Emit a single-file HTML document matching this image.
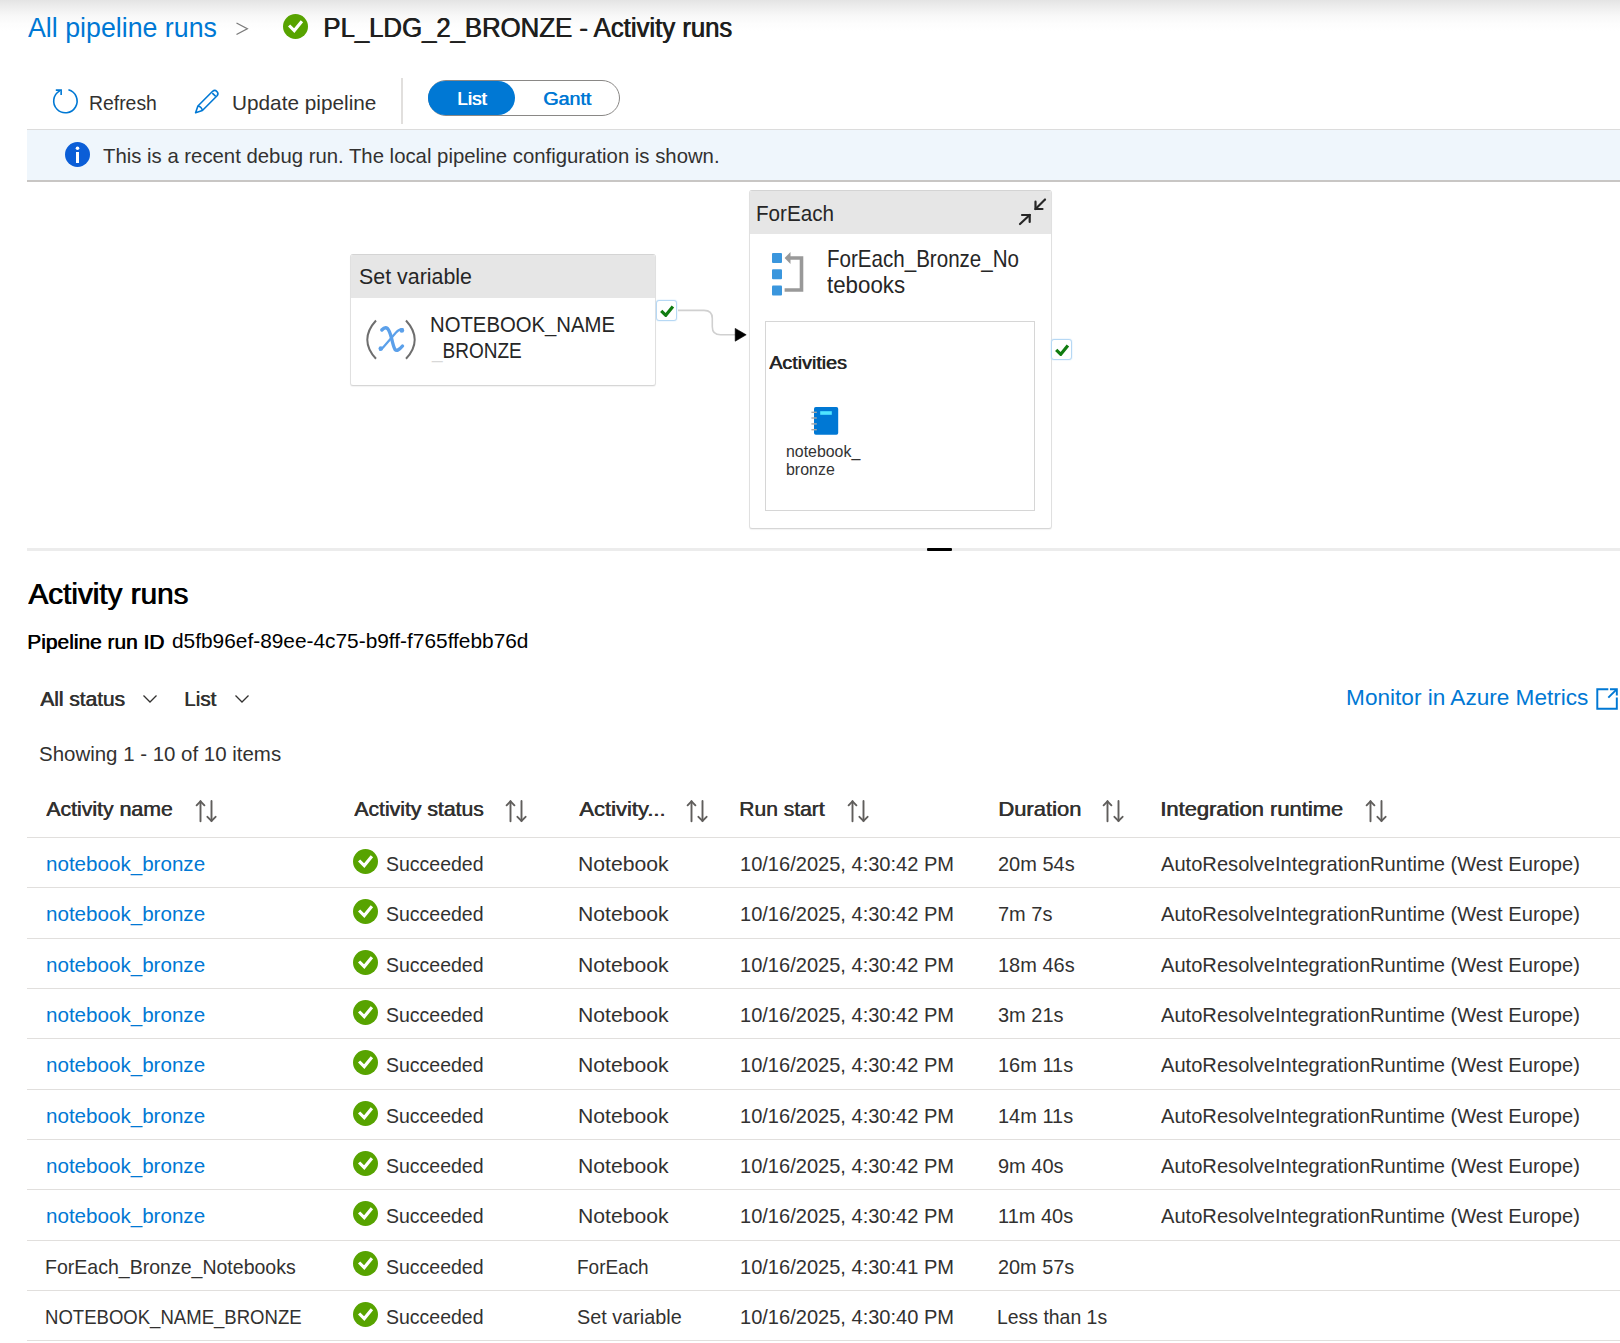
<!DOCTYPE html>
<html><head><meta charset="utf-8"><title>PL_LDG_2_BRONZE - Activity runs</title>
<style>
html,body{margin:0;padding:0;background:#fff;width:1620px;height:1343px;overflow:hidden;position:relative;font-family:"Liberation Sans",sans-serif;}
.a{position:absolute;}
.t{position:absolute;white-space:nowrap;line-height:1;transform-origin:0 0;}
.box{border:1.7px solid #e0e0e0;border-top-color:#d4d4d4;border-bottom-color:#d6d6d6;border-radius:3px;background:#fff;box-shadow:0 1px 1px rgba(0,0,0,0.05);overflow:hidden}
.hd{background:#e6e6e6}
.chk{border:1.6px solid #b6d8f4;border-radius:3px;box-shadow:0 0 1.5px #bcdcf6;background:#fff}
</style></head><body>
<div class="a" style="left:0;top:0;width:1620px;height:32px;background:linear-gradient(#e4e4e4 0,#efefef 8px,#f8f8f8 16px,#fdfdfd 24px,#fff 31px)"></div>
<div class="t" style="left:28.00px;top:13.90px;font-size:28px;color:#0078d4;font-weight:400;transform:scaleX(0.9558);">All pipeline runs</div>
<svg class="a" style="left:235px;top:22px" width="14" height="14" viewBox="0 0 14 14"><path d="M1.5 1 L12.3 6.75 L1.5 12.5" fill="none" stroke="#7a7a7a" stroke-width="1.3"/></svg>
<svg class="a" style="left:283.00px;top:14.00px" width="25" height="25" viewBox="0 0 25 25"><circle cx="12.5" cy="12.5" r="12.5" fill="#57a300"/><path d="M6.1 11.5 L11.25 16.6 L18.9 7.2" fill="none" stroke="#fff" stroke-width="3.1"/></svg>
<div class="t" style="left:322.94px;top:13.62px;font-size:27.5px;color:#201f1e;font-weight:400;transform:scaleX(0.9356);text-shadow:0.8px 0 0 #201f1e;">PL_LDG_2_BRONZE - Activity runs</div>
<svg class="a" style="left:48px;top:84px" width="36" height="34" viewBox="0 0 36 34"><g fill="none" stroke="#0078d4" stroke-width="1.6"><path d="M20.43 5.8 A11.7 11.7 0 1 1 11.73 6.87"/><path d="M7.8 6.15 L13.15 6.15 L13.15 10.9"/></g></svg>
<div class="t" style="left:89.45px;top:93.00px;font-size:20px;color:#323130;font-weight:400;transform:scaleX(0.9687);">Refresh</div>
<svg class="a" style="left:190px;top:84px" width="36" height="34" viewBox="0 0 36 34"><g fill="none" stroke="#0078d4" stroke-width="1.6" stroke-linejoin="round"><path d="M5.6 28.8 L7.9 22.0 L22.6 7.3 A3.2 3.2 0 0 1 27.1 11.8 L12.4 26.5 Z"/><path d="M22.3 9.2 L25.7 12.3"/><path d="M7.9 22.0 Q11.6 22.6 12.4 26.5"/></g></svg>
<div class="t" style="left:231.74px;top:92.75px;font-size:20.3px;color:#323130;font-weight:400;transform:scaleX(1.0242);">Update pipeline</div>
<div class="a" style="left:401px;top:78px;width:2px;height:46px;background:#e1dfdd"></div>
<div class="a" style="left:428px;top:80px;width:190px;height:34px;border:1px solid #8a8886;border-radius:18px"></div>
<div class="a" style="left:428px;top:81px;width:87px;height:34px;background:#0078d4;border-radius:17px"></div>
<div class="t" style="left:457.08px;top:90.04px;font-size:18.3px;color:#fff;font-weight:400;transform:scaleX(1.0409);text-shadow:0.6px 0 0 #fff;">List</div>
<div class="t" style="left:543.22px;top:90.04px;font-size:18.3px;color:#0078d4;font-weight:400;transform:scaleX(1.0746);text-shadow:0.6px 0 0 #0078d4;">Gantt</div>
<div class="a" style="left:27px;top:129px;width:1593px;height:50px;background:#eff6fc;border-top:1px solid #dcdcdc;border-bottom:2px solid #c8c6c4"></div>
<svg class="a" style="left:65px;top:141.5px" width="25" height="25" viewBox="0 0 25 25"><circle cx="12.5" cy="12.5" r="12.5" fill="#0b5ed7"/><circle cx="12.5" cy="6.3" r="1.8" fill="#fff"/><rect x="11" y="10" width="3" height="11" fill="#fff"/></svg>
<div class="t" style="left:102.99px;top:146.02px;font-size:20.8px;color:#323130;font-weight:400;transform:scaleX(0.9774);">This is a recent debug run. The local pipeline configuration is shown.</div>
<div class="a box" style="left:350px;top:254px;width:304px;height:130px;"><div class="hd" style="height:43px"></div></div>
<div class="t" style="left:359.34px;top:266.48px;font-size:22.5px;color:#262626;font-weight:400;transform:scaleX(0.9505);">Set variable</div>
<svg class="a" style="left:350px;top:300px" width="80" height="70" viewBox="0 0 80 70"><path d="M376 320.5 Q367.3 330 367.3 339.7 Q367.3 349.4 376 358.8" transform="translate(-350 -300)" fill="none" stroke="#6e6e6e" stroke-width="2"/><path d="M406 320.5 Q414.7 330 414.7 339.7 Q414.7 349.4 406 358.8" transform="translate(-350 -300)" fill="none" stroke="#6e6e6e" stroke-width="2"/><g fill="none" stroke="#5ba0ea" stroke-linecap="round"><path d="M31.8 30 Q35 26.4 37.6 28.6 Q39.5 30.5 41.5 38 Q43.5 47 45 49.5 Q47.5 52 52.5 46" stroke-width="3.4"/><path d="M52.5 29.2 Q49.5 28.8 46 32.5 L33.5 47 Q31.5 49.5 30 49.6" stroke-width="2.2"/></g><circle cx="51.8" cy="30.4" r="2.4" fill="#5ba0ea"/><circle cx="30.8" cy="48.6" r="2.3" fill="#5ba0ea"/></svg>
<div class="t" style="left:430.08px;top:314.49px;font-size:22.6px;color:#262626;font-weight:400;transform:scaleX(0.8987);">NOTEBOOK_NAME</div>
<div class="t" style="left:431.99px;top:340.26px;font-size:22.4px;color:#262626;font-weight:400;transform:scaleX(0.8491);"><span style="color:#d8d8d8">_</span>BRONZE</div>
<div class="a chk" style="left:655.8px;top:299.8px;width:19px;height:19px"></div>
<svg class="a" style="left:655.8px;top:299.8px" width="22" height="22" viewBox="0 0 22 22"><path d="M5.2 10.8 L9.8 15.3 L16.9 6.5" fill="none" stroke="#107c10" stroke-width="3.2" stroke-linejoin="round"/></svg>
<svg class="a" style="left:676px;top:300px" width="75" height="50" viewBox="0 0 75 50"><path d="M2 10.4 L28 10.4 Q36.3 10.4 36.3 18.5 L36.3 26.7 Q36.3 34.8 44.5 34.8 L60 34.8" fill="none" stroke="#d0d0d0" stroke-width="1.6"/><path d="M59.2 28.4 L70.2 34.8 L59.2 41.2 Z" fill="#000" stroke="#000" stroke-width="0.6" stroke-linejoin="round"/></svg>
<div class="a box" style="left:748.5px;top:190px;width:301px;height:337px;"><div class="hd" style="height:43px"></div></div>
<div class="t" style="left:756.05px;top:201.84px;font-size:22.9px;color:#262626;font-weight:400;transform:scaleX(0.9010);">ForEach</div>
<svg class="a" style="left:1015px;top:195px" width="35" height="35" viewBox="0 0 35 35"><g fill="none" stroke="#262626" stroke-width="2.2" stroke-linecap="round"><path d="M30 4.5 L20.5 14"/><path d="M20.5 6.7 L20.5 14 L27.5 14"/><path d="M5 29 L14.7 20"/><path d="M7 20 L14.7 20 L14.7 27"/></g></svg>
<svg class="a" style="left:770px;top:250px" width="36" height="48" viewBox="0 0 36 48"><rect x="2" y="3" width="10" height="10" rx="1" fill="#3a96dd"/><rect x="2" y="19.2" width="10" height="10" rx="1" fill="#3a96dd"/><rect x="2" y="35.4" width="10" height="10" rx="1" fill="#3a96dd"/><path d="M19 8 L31.5 8 L31.5 40 L14.6 40" fill="none" stroke="#999" stroke-width="3.6"/><path d="M14.6 8 L20.5 2 L20.5 14 Z" fill="#999"/></svg>
<div class="t" style="left:827.05px;top:248.28px;font-size:23.2px;color:#262626;font-weight:400;transform:scaleX(0.8868);">ForEach_Bronze_No</div>
<div class="t" style="left:827.47px;top:273.58px;font-size:23.2px;color:#262626;font-weight:400;transform:scaleX(0.9619);">tebooks</div>
<div class="a" style="left:764.5px;top:321px;width:268px;height:187.5px;border:1.7px solid #d6d6d6"></div>
<div class="t" style="left:768.80px;top:354.25px;font-size:18.3px;color:#262626;font-weight:400;transform:scaleX(1.0761);text-shadow:0.6px 0 0 #262626;">Activities</div>
<svg class="a" style="left:810px;top:406px" width="30" height="30" viewBox="0 0 30 30"><rect x="4" y="1" width="24.2" height="27.7" rx="1.8" fill="#0078d4"/><rect x="10.2" y="5.2" width="11.6" height="3.6" fill="#50e6ff"/><g stroke="#a8a8a8" stroke-width="1.4"><path d="M1.4 6.3 L6.8 6.3"/><path d="M1.4 12 L6.8 12"/><path d="M1.4 17.9 L6.8 17.9"/><path d="M1.4 23.7 L6.8 23.7"/></g></svg>
<div class="t" style="left:786.47px;top:443.04px;font-size:16.3px;color:#333;font-weight:400;transform:scaleX(0.9760);">notebook_</div>
<div class="t" style="left:786.46px;top:460.94px;font-size:16.3px;color:#333;font-weight:400;transform:scaleX(0.9791);">bronze</div>
<div class="a chk" style="left:1051.2px;top:338.8px;width:19px;height:19px"></div>
<svg class="a" style="left:1051.2px;top:338.8px" width="22" height="22" viewBox="0 0 22 22"><path d="M5.2 10.8 L9.8 15.3 L16.9 6.5" fill="none" stroke="#107c10" stroke-width="3.2" stroke-linejoin="round"/></svg>
<div class="a" style="left:27px;top:548px;width:1593px;height:3px;background:#ececec"></div>
<div class="a" style="left:927px;top:548px;width:25px;height:3px;background:#000;border-radius:1px"></div>
<div class="t" style="left:27.80px;top:580.25px;font-size:29px;color:#000;font-weight:400;transform:scaleX(1.0239);text-shadow:0.9px 0 0 #000;">Activity runs</div>
<div class="t" style="left:27.03px;top:631.66px;font-size:20.4px;color:#000;font-weight:400;transform:scaleX(1.0261);text-shadow:0.6px 0 0 #000;">Pipeline run ID</div>
<div class="t" style="left:172.27px;top:630.15px;font-size:21px;color:#000;font-weight:400;transform:scaleX(0.9933);">d5fb96ef-89ee-4c75-b9ff-f765ffebb76d</div>
<div class="t" style="left:40.10px;top:689.00px;font-size:20px;color:#323130;font-weight:400;transform:scaleX(1.0448);text-shadow:0.6px 0 0 #323130;">All status</div>
<svg class="a" style="left:142px;top:693.5px" width="16" height="10" viewBox="0 0 16 10"><path d="M1.5 1.5 L8 8 L14.5 1.5" fill="none" stroke="#323130" stroke-width="1.3"/></svg>
<div class="t" style="left:183.95px;top:689.00px;font-size:20px;color:#323130;font-weight:400;transform:scaleX(1.0306);text-shadow:0.6px 0 0 #323130;">List</div>
<svg class="a" style="left:233.5px;top:693.5px" width="16" height="10" viewBox="0 0 16 10"><path d="M1.5 1.5 L8 8 L14.5 1.5" fill="none" stroke="#323130" stroke-width="1.3"/></svg>
<div class="t" style="left:39.48px;top:743.70px;font-size:20px;color:#323130;font-weight:400;transform:scaleX(1.0225);">Showing 1 - 10 of 10 items</div>
<div class="t" style="left:1346.09px;top:687.19px;font-size:22.6px;color:#0078d4;font-weight:400;">Monitor in Azure Metrics</div>
<svg class="a" style="left:1595px;top:687px" width="24" height="24" viewBox="0 0 22 22"><g fill="none" stroke="#0078d4" stroke-width="1.8"><path d="M12.2 2.0 L2.1 2.0 L2.1 19.9 L20.0 19.9 L20.0 9.7"/><path d="M13.7 2.0 L20.0 2.0 L20.0 7.9"/><path d="M12.2 9.7 L19.6 2.4"/></g></svg>
<div class="t" style="left:46.30px;top:798.75px;font-size:20.3px;color:#323130;font-weight:400;transform:scaleX(1.0487);text-shadow:0.6px 0 0 #323130;">Activity name</div>
<svg class="a" style="left:195px;top:799px" width="22" height="24" viewBox="0 0 22 24"><g fill="none" stroke="#605e5c" stroke-width="1.9" stroke-linecap="round"><path d="M5.5 22.3 L5.5 2.3"/><path d="M1.6 6.3 L5.5 2.3 L9.4 6.3"/><path d="M16.5 2 L16.5 22"/><path d="M12.4 17.8 L16.5 22 L20.6 17.8"/></g></svg>
<div class="t" style="left:354.00px;top:798.75px;font-size:20.3px;color:#323130;font-weight:400;transform:scaleX(1.0452);text-shadow:0.6px 0 0 #323130;">Activity status</div>
<svg class="a" style="left:505px;top:799px" width="22" height="24" viewBox="0 0 22 24"><g fill="none" stroke="#605e5c" stroke-width="1.9" stroke-linecap="round"><path d="M5.5 22.3 L5.5 2.3"/><path d="M1.6 6.3 L5.5 2.3 L9.4 6.3"/><path d="M16.5 2 L16.5 22"/><path d="M12.4 17.8 L16.5 22 L20.6 17.8"/></g></svg>
<div class="t" style="left:578.80px;top:798.75px;font-size:20.3px;color:#323130;font-weight:400;transform:scaleX(1.0841);text-shadow:0.6px 0 0 #323130;">Activity...</div>
<svg class="a" style="left:685.7px;top:799px" width="22" height="24" viewBox="0 0 22 24"><g fill="none" stroke="#605e5c" stroke-width="1.9" stroke-linecap="round"><path d="M5.5 22.3 L5.5 2.3"/><path d="M1.6 6.3 L5.5 2.3 L9.4 6.3"/><path d="M16.5 2 L16.5 22"/><path d="M12.4 17.8 L16.5 22 L20.6 17.8"/></g></svg>
<div class="t" style="left:738.92px;top:798.75px;font-size:20.3px;color:#323130;font-weight:400;transform:scaleX(1.0373);text-shadow:0.6px 0 0 #323130;">Run start</div>
<svg class="a" style="left:846.7px;top:799px" width="22" height="24" viewBox="0 0 22 24"><g fill="none" stroke="#605e5c" stroke-width="1.9" stroke-linecap="round"><path d="M5.5 22.3 L5.5 2.3"/><path d="M1.6 6.3 L5.5 2.3 L9.4 6.3"/><path d="M16.5 2 L16.5 22"/><path d="M12.4 17.8 L16.5 22 L20.6 17.8"/></g></svg>
<div class="t" style="left:997.74px;top:798.75px;font-size:20.3px;color:#323130;font-weight:400;transform:scaleX(1.0842);text-shadow:0.6px 0 0 #323130;">Duration</div>
<svg class="a" style="left:1101.6px;top:799px" width="22" height="24" viewBox="0 0 22 24"><g fill="none" stroke="#605e5c" stroke-width="1.9" stroke-linecap="round"><path d="M5.5 22.3 L5.5 2.3"/><path d="M1.6 6.3 L5.5 2.3 L9.4 6.3"/><path d="M16.5 2 L16.5 22"/><path d="M12.4 17.8 L16.5 22 L20.6 17.8"/></g></svg>
<div class="t" style="left:1160.02px;top:798.75px;font-size:20.3px;color:#323130;font-weight:400;transform:scaleX(1.0813);text-shadow:0.6px 0 0 #323130;">Integration runtime</div>
<svg class="a" style="left:1364.7px;top:799px" width="22" height="24" viewBox="0 0 22 24"><g fill="none" stroke="#605e5c" stroke-width="1.9" stroke-linecap="round"><path d="M5.5 22.3 L5.5 2.3"/><path d="M1.6 6.3 L5.5 2.3 L9.4 6.3"/><path d="M16.5 2 L16.5 22"/><path d="M12.4 17.8 L16.5 22 L20.6 17.8"/></g></svg>
<div class="a" style="left:27px;top:837px;width:1593px;height:1px;background:#e1dfdd"></div>
<div class="t" style="left:45.86px;top:855.17px;font-size:19.8px;color:#0078d4;font-weight:400;transform:scaleX(1.0406);">notebook_bronze</div>
<svg class="a" style="left:352.90px;top:848.90px" width="25" height="25" viewBox="0 0 25 25"><circle cx="12.5" cy="12.5" r="12.5" fill="#57a300"/><path d="M6.1 11.5 L11.25 16.6 L18.9 7.2" fill="none" stroke="#fff" stroke-width="3.1"/></svg>
<div class="t" style="left:386.32px;top:855.17px;font-size:19.8px;color:#323130;font-weight:400;transform:scaleX(0.9853);">Succeeded</div>
<div class="t" style="left:577.70px;top:855.17px;font-size:19.8px;color:#323130;font-weight:400;transform:scaleX(1.0702);">Notebook</div>
<div class="t" style="left:739.90px;top:855.17px;font-size:19.8px;color:#323130;font-weight:400;transform:scaleX(1.0135);">10/16/2025, 4:30:42 PM</div>
<div class="t" style="left:997.70px;top:855.17px;font-size:19.8px;color:#323130;font-weight:400;transform:scaleX(1.0101);">20m 54s</div>
<div class="t" style="left:1161.30px;top:855.17px;font-size:19.8px;color:#323130;font-weight:400;transform:scaleX(1.0167);">AutoResolveIntegrationRuntime (West Europe)</div>
<div class="a" style="left:27px;top:887.32px;width:1593px;height:1px;background:#e1dfdd"></div>
<div class="t" style="left:45.86px;top:905.49px;font-size:19.8px;color:#0078d4;font-weight:400;transform:scaleX(1.0406);">notebook_bronze</div>
<svg class="a" style="left:352.90px;top:899.22px" width="25" height="25" viewBox="0 0 25 25"><circle cx="12.5" cy="12.5" r="12.5" fill="#57a300"/><path d="M6.1 11.5 L11.25 16.6 L18.9 7.2" fill="none" stroke="#fff" stroke-width="3.1"/></svg>
<div class="t" style="left:386.32px;top:905.49px;font-size:19.8px;color:#323130;font-weight:400;transform:scaleX(0.9853);">Succeeded</div>
<div class="t" style="left:577.70px;top:905.49px;font-size:19.8px;color:#323130;font-weight:400;transform:scaleX(1.0702);">Notebook</div>
<div class="t" style="left:739.90px;top:905.49px;font-size:19.8px;color:#323130;font-weight:400;transform:scaleX(1.0135);">10/16/2025, 4:30:42 PM</div>
<div class="t" style="left:997.70px;top:905.49px;font-size:19.8px;color:#323130;font-weight:400;transform:scaleX(1.0101);">7m 7s</div>
<div class="t" style="left:1161.30px;top:905.49px;font-size:19.8px;color:#323130;font-weight:400;transform:scaleX(1.0167);">AutoResolveIntegrationRuntime (West Europe)</div>
<div class="a" style="left:27px;top:937.64px;width:1593px;height:1px;background:#e1dfdd"></div>
<div class="t" style="left:45.86px;top:955.81px;font-size:19.8px;color:#0078d4;font-weight:400;transform:scaleX(1.0406);">notebook_bronze</div>
<svg class="a" style="left:352.90px;top:949.54px" width="25" height="25" viewBox="0 0 25 25"><circle cx="12.5" cy="12.5" r="12.5" fill="#57a300"/><path d="M6.1 11.5 L11.25 16.6 L18.9 7.2" fill="none" stroke="#fff" stroke-width="3.1"/></svg>
<div class="t" style="left:386.32px;top:955.81px;font-size:19.8px;color:#323130;font-weight:400;transform:scaleX(0.9853);">Succeeded</div>
<div class="t" style="left:577.70px;top:955.81px;font-size:19.8px;color:#323130;font-weight:400;transform:scaleX(1.0702);">Notebook</div>
<div class="t" style="left:739.90px;top:955.81px;font-size:19.8px;color:#323130;font-weight:400;transform:scaleX(1.0135);">10/16/2025, 4:30:42 PM</div>
<div class="t" style="left:997.80px;top:955.81px;font-size:19.8px;color:#323130;font-weight:400;transform:scaleX(1.0101);">18m 46s</div>
<div class="t" style="left:1161.30px;top:955.81px;font-size:19.8px;color:#323130;font-weight:400;transform:scaleX(1.0167);">AutoResolveIntegrationRuntime (West Europe)</div>
<div class="a" style="left:27px;top:987.96px;width:1593px;height:1px;background:#e1dfdd"></div>
<div class="t" style="left:45.86px;top:1006.13px;font-size:19.8px;color:#0078d4;font-weight:400;transform:scaleX(1.0406);">notebook_bronze</div>
<svg class="a" style="left:352.90px;top:999.86px" width="25" height="25" viewBox="0 0 25 25"><circle cx="12.5" cy="12.5" r="12.5" fill="#57a300"/><path d="M6.1 11.5 L11.25 16.6 L18.9 7.2" fill="none" stroke="#fff" stroke-width="3.1"/></svg>
<div class="t" style="left:386.32px;top:1006.13px;font-size:19.8px;color:#323130;font-weight:400;transform:scaleX(0.9853);">Succeeded</div>
<div class="t" style="left:577.70px;top:1006.13px;font-size:19.8px;color:#323130;font-weight:400;transform:scaleX(1.0702);">Notebook</div>
<div class="t" style="left:739.90px;top:1006.13px;font-size:19.8px;color:#323130;font-weight:400;transform:scaleX(1.0135);">10/16/2025, 4:30:42 PM</div>
<div class="t" style="left:997.90px;top:1006.13px;font-size:19.8px;color:#323130;font-weight:400;transform:scaleX(1.0101);">3m 21s</div>
<div class="t" style="left:1161.30px;top:1006.13px;font-size:19.8px;color:#323130;font-weight:400;transform:scaleX(1.0167);">AutoResolveIntegrationRuntime (West Europe)</div>
<div class="a" style="left:27px;top:1038.28px;width:1593px;height:1px;background:#e1dfdd"></div>
<div class="t" style="left:45.86px;top:1056.45px;font-size:19.8px;color:#0078d4;font-weight:400;transform:scaleX(1.0406);">notebook_bronze</div>
<svg class="a" style="left:352.90px;top:1050.18px" width="25" height="25" viewBox="0 0 25 25"><circle cx="12.5" cy="12.5" r="12.5" fill="#57a300"/><path d="M6.1 11.5 L11.25 16.6 L18.9 7.2" fill="none" stroke="#fff" stroke-width="3.1"/></svg>
<div class="t" style="left:386.32px;top:1056.45px;font-size:19.8px;color:#323130;font-weight:400;transform:scaleX(0.9853);">Succeeded</div>
<div class="t" style="left:577.70px;top:1056.45px;font-size:19.8px;color:#323130;font-weight:400;transform:scaleX(1.0702);">Notebook</div>
<div class="t" style="left:739.90px;top:1056.45px;font-size:19.8px;color:#323130;font-weight:400;transform:scaleX(1.0135);">10/16/2025, 4:30:42 PM</div>
<div class="t" style="left:997.80px;top:1056.45px;font-size:19.8px;color:#323130;font-weight:400;transform:scaleX(1.0101);">16m 11s</div>
<div class="t" style="left:1161.30px;top:1056.45px;font-size:19.8px;color:#323130;font-weight:400;transform:scaleX(1.0167);">AutoResolveIntegrationRuntime (West Europe)</div>
<div class="a" style="left:27px;top:1088.60px;width:1593px;height:1px;background:#e1dfdd"></div>
<div class="t" style="left:45.86px;top:1106.77px;font-size:19.8px;color:#0078d4;font-weight:400;transform:scaleX(1.0406);">notebook_bronze</div>
<svg class="a" style="left:352.90px;top:1100.50px" width="25" height="25" viewBox="0 0 25 25"><circle cx="12.5" cy="12.5" r="12.5" fill="#57a300"/><path d="M6.1 11.5 L11.25 16.6 L18.9 7.2" fill="none" stroke="#fff" stroke-width="3.1"/></svg>
<div class="t" style="left:386.32px;top:1106.77px;font-size:19.8px;color:#323130;font-weight:400;transform:scaleX(0.9853);">Succeeded</div>
<div class="t" style="left:577.70px;top:1106.77px;font-size:19.8px;color:#323130;font-weight:400;transform:scaleX(1.0702);">Notebook</div>
<div class="t" style="left:739.90px;top:1106.77px;font-size:19.8px;color:#323130;font-weight:400;transform:scaleX(1.0135);">10/16/2025, 4:30:42 PM</div>
<div class="t" style="left:997.80px;top:1106.77px;font-size:19.8px;color:#323130;font-weight:400;transform:scaleX(1.0101);">14m 11s</div>
<div class="t" style="left:1161.30px;top:1106.77px;font-size:19.8px;color:#323130;font-weight:400;transform:scaleX(1.0167);">AutoResolveIntegrationRuntime (West Europe)</div>
<div class="a" style="left:27px;top:1138.92px;width:1593px;height:1px;background:#e1dfdd"></div>
<div class="t" style="left:45.86px;top:1157.09px;font-size:19.8px;color:#0078d4;font-weight:400;transform:scaleX(1.0406);">notebook_bronze</div>
<svg class="a" style="left:352.90px;top:1150.82px" width="25" height="25" viewBox="0 0 25 25"><circle cx="12.5" cy="12.5" r="12.5" fill="#57a300"/><path d="M6.1 11.5 L11.25 16.6 L18.9 7.2" fill="none" stroke="#fff" stroke-width="3.1"/></svg>
<div class="t" style="left:386.32px;top:1157.09px;font-size:19.8px;color:#323130;font-weight:400;transform:scaleX(0.9853);">Succeeded</div>
<div class="t" style="left:577.70px;top:1157.09px;font-size:19.8px;color:#323130;font-weight:400;transform:scaleX(1.0702);">Notebook</div>
<div class="t" style="left:739.90px;top:1157.09px;font-size:19.8px;color:#323130;font-weight:400;transform:scaleX(1.0135);">10/16/2025, 4:30:42 PM</div>
<div class="t" style="left:997.80px;top:1157.09px;font-size:19.8px;color:#323130;font-weight:400;transform:scaleX(1.0101);">9m 40s</div>
<div class="t" style="left:1161.30px;top:1157.09px;font-size:19.8px;color:#323130;font-weight:400;transform:scaleX(1.0167);">AutoResolveIntegrationRuntime (West Europe)</div>
<div class="a" style="left:27px;top:1189.24px;width:1593px;height:1px;background:#e1dfdd"></div>
<div class="t" style="left:45.86px;top:1207.41px;font-size:19.8px;color:#0078d4;font-weight:400;transform:scaleX(1.0406);">notebook_bronze</div>
<svg class="a" style="left:352.90px;top:1201.14px" width="25" height="25" viewBox="0 0 25 25"><circle cx="12.5" cy="12.5" r="12.5" fill="#57a300"/><path d="M6.1 11.5 L11.25 16.6 L18.9 7.2" fill="none" stroke="#fff" stroke-width="3.1"/></svg>
<div class="t" style="left:386.32px;top:1207.41px;font-size:19.8px;color:#323130;font-weight:400;transform:scaleX(0.9853);">Succeeded</div>
<div class="t" style="left:577.70px;top:1207.41px;font-size:19.8px;color:#323130;font-weight:400;transform:scaleX(1.0702);">Notebook</div>
<div class="t" style="left:739.90px;top:1207.41px;font-size:19.8px;color:#323130;font-weight:400;transform:scaleX(1.0135);">10/16/2025, 4:30:42 PM</div>
<div class="t" style="left:997.80px;top:1207.41px;font-size:19.8px;color:#323130;font-weight:400;transform:scaleX(1.0101);">11m 40s</div>
<div class="t" style="left:1161.30px;top:1207.41px;font-size:19.8px;color:#323130;font-weight:400;transform:scaleX(1.0167);">AutoResolveIntegrationRuntime (West Europe)</div>
<div class="a" style="left:27px;top:1239.56px;width:1593px;height:1px;background:#e1dfdd"></div>
<div class="t" style="left:45.34px;top:1257.73px;font-size:19.8px;color:#323130;font-weight:400;transform:scaleX(0.9871);">ForEach_Bronze_Notebooks</div>
<svg class="a" style="left:352.90px;top:1251.46px" width="25" height="25" viewBox="0 0 25 25"><circle cx="12.5" cy="12.5" r="12.5" fill="#57a300"/><path d="M6.1 11.5 L11.25 16.6 L18.9 7.2" fill="none" stroke="#fff" stroke-width="3.1"/></svg>
<div class="t" style="left:386.32px;top:1257.73px;font-size:19.8px;color:#323130;font-weight:400;transform:scaleX(0.9853);">Succeeded</div>
<div class="t" style="left:576.78px;top:1257.73px;font-size:19.8px;color:#323130;font-weight:400;transform:scaleX(0.9587);">ForEach</div>
<div class="t" style="left:739.90px;top:1257.73px;font-size:19.8px;color:#323130;font-weight:400;transform:scaleX(1.0135);">10/16/2025, 4:30:41 PM</div>
<div class="t" style="left:997.71px;top:1257.73px;font-size:19.8px;color:#323130;font-weight:400;transform:scaleX(1.0047);">20m 57s</div>
<div class="a" style="left:27px;top:1289.88px;width:1593px;height:1px;background:#e1dfdd"></div>
<div class="t" style="left:45.41px;top:1308.05px;font-size:19.8px;color:#323130;font-weight:400;transform:scaleX(0.9376);">NOTEBOOK_NAME_BRONZE</div>
<svg class="a" style="left:352.90px;top:1301.78px" width="25" height="25" viewBox="0 0 25 25"><circle cx="12.5" cy="12.5" r="12.5" fill="#57a300"/><path d="M6.1 11.5 L11.25 16.6 L18.9 7.2" fill="none" stroke="#fff" stroke-width="3.1"/></svg>
<div class="t" style="left:386.32px;top:1308.05px;font-size:19.8px;color:#323130;font-weight:400;transform:scaleX(0.9853);">Succeeded</div>
<div class="t" style="left:577.41px;top:1308.05px;font-size:19.8px;color:#323130;font-weight:400;transform:scaleX(1.0023);">Set variable</div>
<div class="t" style="left:739.90px;top:1308.05px;font-size:19.8px;color:#323130;font-weight:400;transform:scaleX(1.0135);">10/16/2025, 4:30:40 PM</div>
<div class="t" style="left:997.14px;top:1308.05px;font-size:19.8px;color:#323130;font-weight:400;transform:scaleX(0.9819);">Less than 1s</div>
<div class="a" style="left:27px;top:1340.20px;width:1593px;height:1px;background:#e1dfdd"></div>
</body></html>
